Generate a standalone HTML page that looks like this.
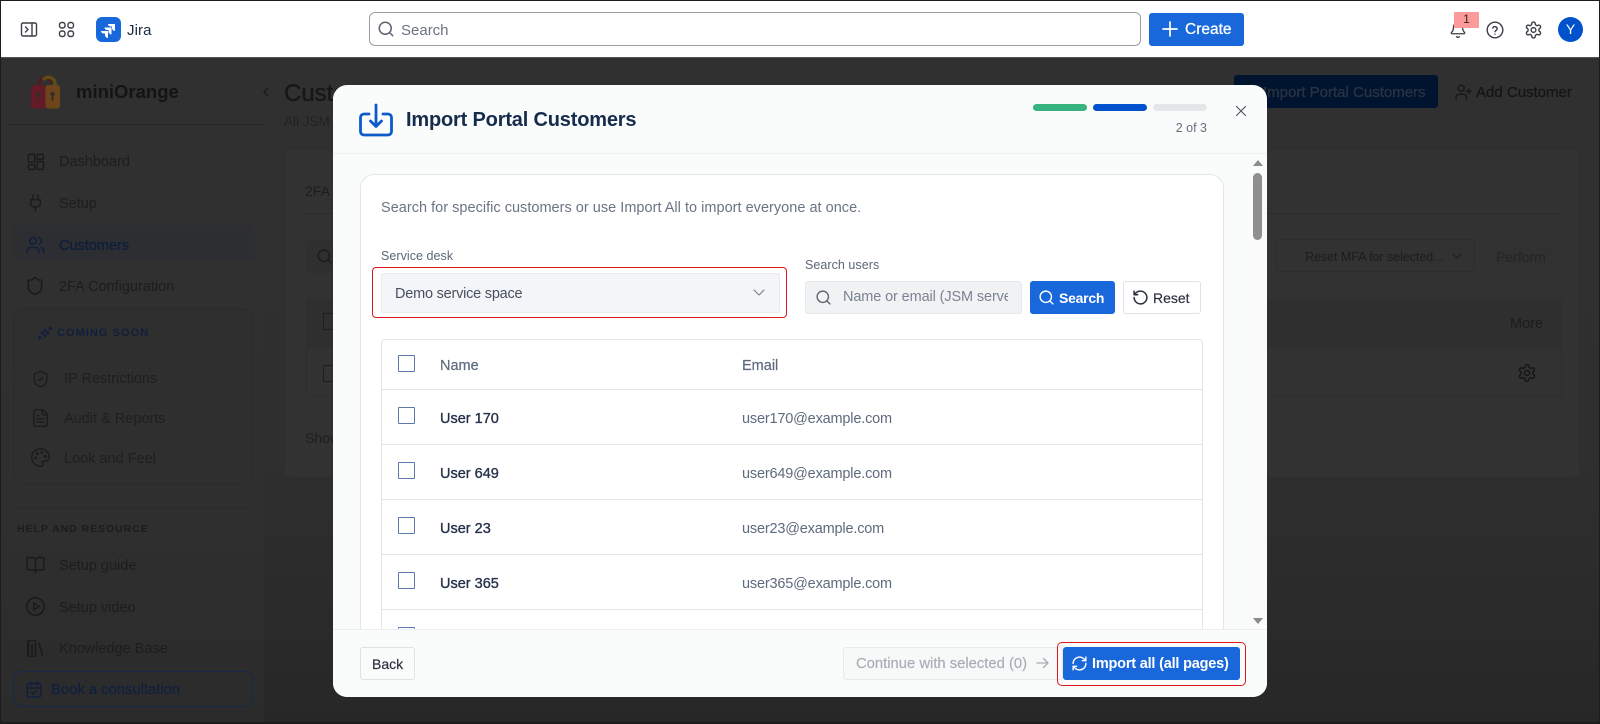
<!DOCTYPE html>
<html lang="en"><head><meta charset="utf-8"><title>Import Portal Customers</title>
<style>
*{box-sizing:border-box}
html,body{margin:0;padding:0;width:1600px;height:724px;overflow:hidden;background:#2a2a2a;font-family:"Liberation Sans",Arial,sans-serif}
.a{position:absolute}
.t{position:absolute;white-space:nowrap;line-height:20px;height:20px}
svg{position:absolute;display:block;fill:none;stroke-linecap:round;stroke-linejoin:round}
.d{color:#1d1d1d;font-size:14.5px}
.b{font-weight:bold}
.cb{position:absolute;left:398px;width:17px;height:17px;border:1.5px solid #5a78ad;border-radius:1px;background:#fff}
.hl{position:absolute;left:381px;width:822px;height:1px;background:#e3e5e8}
.n{left:440px;font-size:14.5px;color:#26324a;-webkit-text-stroke:.35px #26324a}
.e{left:742px;font-size:14.5px;color:#5e6a7d;letter-spacing:-.18px}
</style></head><body>
<div class="a" style="left:0;top:0;width:1600px;height:724px;overflow:hidden;filter:blur(.3px)">

<!-- dim page -->
<div class="a" style="left:264px;top:58px;width:1336px;height:666px;background:linear-gradient(#303030 0,#2f2f2f 60%,#272727 100%)"></div>
<div class="a" style="left:0;top:58px;width:264px;height:666px;background:linear-gradient(#303030 0,#2f2f2f 70%,#2b2b2b 100%)"></div>
<div class="a" style="left:4px;top:124px;width:260px;height:1px;background:#292929"></div>

<!-- logo -->
<svg style="left:30px;top:74px" width="32" height="36" viewBox="0 0 32 36">
<path d="M9 13V9.500a6 6 0 0 1 11-3" stroke="#4e1a24" stroke-width="3.400"/>
<path d="M14 5a6.500 6.500 0 0 1 11 4.500V14" stroke="#5b4d14" stroke-width="3.400"/>
<rect x="1" y="11" width="15" height="23.500" rx="3" fill="#651a28"/>
<rect x="15.500" y="11" width="14.500" height="23.500" rx="3" fill="#6e451a"/>
<circle cx="8.500" cy="20" r="2.200" fill="#2e2e2e"/><path d="M8.500 21v5" stroke="#2e2e2e" stroke-width="2"/>
<circle cx="22.500" cy="20" r="2.200" fill="#2e2e2e"/><path d="M22.500 21v5" stroke="#2e2e2e" stroke-width="2"/>
</svg>
<div class="t b" style="left:76px;top:82px;font-size:18.5px;color:#141414;letter-spacing:0">miniOrange</div>
<svg style="left:260px;top:85px" width="12" height="14" viewBox="0 0 12 14"><path d="M8 3 4 7l4 4" stroke="#1a1a1a" stroke-width="1.400"/></svg>

<!-- sidebar nav -->
<div class="a" style="left:13px;top:225px;width:242px;height:36px;background:#2d2e31;border-radius:6px"></div>
<svg style="left:26px;top:152px" width="19" height="19" viewBox="0 0 24 24" stroke="#1a1a1a" stroke-width="1.800"><rect x="3" y="3" width="8" height="10" rx="1.500"/><rect x="14" y="3" width="8" height="6" rx="1.500"/><rect x="14" y="12" width="8" height="10" rx="1.500"/><rect x="3" y="16" width="8" height="6" rx="1.500"/></svg>
<div class="t d" style="left:59px;top:152px">Dashboard</div>
<svg style="left:26px;top:193px" width="19" height="20" viewBox="0 0 24 24" stroke="#1a1a1a" stroke-width="1.800"><path d="M12 22v-5M9 8V2M15 8V2M18 8v5a4 4 0 0 1-4 4h-4a4 4 0 0 1-4-4V8z"/></svg>
<div class="t d" style="left:59px;top:194px">Setup</div>
<svg style="left:25px;top:235px" width="21" height="20" viewBox="0 0 24 24" stroke="#101f3d" stroke-width="1.800"><path d="M16 21v-2a4 4 0 0 0-4-4H6a4 4 0 0 0-4 4v2"/><circle cx="9" cy="7" r="4"/><path d="M22 21v-2a4 4 0 0 0-3-3.870M16 3.130a4 4 0 0 1 0 7.750"/></svg>
<div class="t" style="left:59px;top:236px;font-size:14.5px;color:#0f1e3c;-webkit-text-stroke:.3px #0f1e3c">Customers</div>
<svg style="left:25px;top:276px" width="20" height="20" viewBox="0 0 24 24" stroke="#1a1a1a" stroke-width="1.800"><path d="M20 13c0 5-3.500 7.500-7.660 8.950a1 1 0 0 1-.67-.01C7.500 20.500 4 18 4 13V6a1 1 0 0 1 1-1c2 0 4.500-1.200 6.240-2.720a1.170 1.170 0 0 1 1.520 0C14.510 3.810 17 5 19 5a1 1 0 0 1 1 1z"/></svg>
<div class="t d" style="left:59px;top:277px">2FA Configuration</div>

<!-- coming soon -->
<div class="a" style="left:13px;top:308px;width:240px;height:176px;border:1px solid #2b2b2b;border-radius:10px;background:#2f2f2f"></div>
<svg style="left:37px;top:325px" width="16" height="16" viewBox="0 0 24 24" stroke="#101f3d" stroke-width="2.200"><path d="M12 6l2 4 4 2-4 2-2 4-2-4-4-2 4-2zM20 3v4M18 5h4M4 17v4M2 19h4"/></svg>
<div class="t b" style="left:57px;top:323px;font-size:11px;color:#101f3d;letter-spacing:1.050px">COMING SOON</div>
<svg style="left:31px;top:369px" width="19" height="20" viewBox="0 0 24 24" stroke="#1c1c1c" stroke-width="1.700"><path d="M20 13c0 5-3.500 7.500-7.660 8.950a1 1 0 0 1-.67-.01C7.500 20.500 4 18 4 13V6a1 1 0 0 1 1-1c2 0 4.500-1.200 6.240-2.720a1.170 1.170 0 0 1 1.520 0C14.510 3.810 17 5 19 5a1 1 0 0 1 1 1z"/><path d="m9 12 2 2 4-4"/></svg>
<div class="t d" style="left:64px;top:369px;color:#1f1f1f">IP Restrictions</div>
<svg style="left:30px;top:408px" width="21" height="20" viewBox="0 0 24 24" stroke="#1c1c1c" stroke-width="1.700"><path d="M15 2H6a2 2 0 0 0-2 2v16a2 2 0 0 0 2 2h12a2 2 0 0 0 2-2V7z"/><path d="M14 2v4a2 2 0 0 0 2 2h4M10 9H8M16 13H8M16 17H8"/></svg>
<div class="t d" style="left:64px;top:409px;color:#1f1f1f">Audit &amp; Reports</div>
<svg style="left:30px;top:447px" width="21" height="21" viewBox="0 0 24 24" stroke="#1c1c1c" stroke-width="1.700"><path d="M12 22a10 10 0 1 1 10-10c0 2.500-2 4-4 4h-2.300a1.700 1.700 0 0 0-1.200 2.900c.5.5.5 1.300.2 1.900-.5.8-1.500 1.200-2.700 1.200z"/><circle cx="13.500" cy="6.500" r=".8"/><circle cx="17.500" cy="10.500" r=".8"/><circle cx="6.500" cy="12.500" r=".8"/><circle cx="8.500" cy="7.500" r=".8"/></svg>
<div class="t d" style="left:64px;top:449px;color:#1f1f1f">Look and Feel</div>

<div class="a" style="left:13px;top:508px;width:240px;height:1px;background:#2a2a2a"></div>
<div class="t b" style="left:17px;top:519px;font-size:10.5px;color:#1c1c1c;letter-spacing:.95px">HELP AND RESOURCE</div>
<svg style="left:25px;top:555px" width="21" height="20" viewBox="0 0 24 24" stroke="#1a1a1a" stroke-width="1.700"><path d="M12 7v14M3 18a1 1 0 0 1-1-1V4a1 1 0 0 1 1-1h5a4 4 0 0 1 4 4 4 4 0 0 1 4-4h5a1 1 0 0 1 1 1v13a1 1 0 0 1-1 1h-6a3 3 0 0 0-3 3 3 3 0 0 0-3-3z"/></svg>
<div class="t d" style="left:59px;top:556px">Setup guide</div>
<svg style="left:25px;top:596px" width="21" height="21" viewBox="0 0 24 24" stroke="#1a1a1a" stroke-width="1.700"><circle cx="12" cy="12" r="10"/><path d="m10 8 6 4-6 4z"/></svg>
<div class="t d" style="left:59px;top:598px">Setup video</div>
<svg style="left:25px;top:638px" width="21" height="21" viewBox="0 0 24 24" stroke="#1a1a1a" stroke-width="1.700"><path d="m16 6 4 14M12 6v14M8 8v12M4 4v16"/><path d="M3 3h9v18H3z" stroke-width="1.200"/></svg>
<div class="t d" style="left:59px;top:639px">Knowledge Base</div>
<div class="a" style="left:13px;top:671px;width:240px;height:36px;border:1px solid #16294a;border-radius:9px"></div>
<svg style="left:25px;top:680px" width="18" height="19" viewBox="0 0 24 24" stroke="#101f3d" stroke-width="2"><rect x="3" y="4" width="18" height="18" rx="2"/><path d="M16 2v4M8 2v4M3 10h18M9 16l2 2 4-4"/></svg>
<div class="t" style="left:51px;top:680px;font-size:14.8px;color:#10203f;-webkit-text-stroke:.2px #10203f">Book a consultation</div>

<!-- main -->
<div class="t" style="left:284px;top:82px;font-size:24px;color:#161616;height:24px;line-height:24px;-webkit-text-stroke:.3px #161616">Customers</div>
<div class="t" style="left:284px;top:112px;font-size:13.5px;color:#222">All JSM</div>
<div class="a" style="left:284px;top:148px;width:1296px;height:330px;background:#323232;border:1px solid #2e2e2e;border-radius:6px"></div>
<div class="t" style="left:305px;top:181px;font-size:14px;color:#1d1d1d">2FA</div>
<div class="a" style="left:300px;top:213px;width:1260px;height:1px;background:#2b2b2b"></div>
<div class="a" style="left:307px;top:240px;width:200px;height:33px;background:#2f2f2f;border-radius:3px"></div>
<svg style="left:316px;top:248px" width="17" height="17" viewBox="0 0 24 24" stroke="#1c1c1c" stroke-width="2"><circle cx="11" cy="11" r="8"/><path d="m21 21-4.300-4.300"/></svg>
<div class="a" style="left:306px;top:299px;width:1256px;height:48px;background:#2f2f2f"></div>
<div class="a" style="left:306px;top:347px;width:1256px;height:50px;border:1px solid #2d2d2d;border-top:0"></div>
<div class="a" style="left:323px;top:313px;width:17px;height:17px;border:1px solid #1e1e1e"></div>
<div class="a" style="left:323px;top:365px;width:17px;height:17px;border:1px solid #1e1e1e"></div>
<div class="t" style="left:305px;top:428px;font-size:14px;color:#1d1d1d">Showing</div>
<div class="a" style="left:1276px;top:239px;width:199px;height:33px;border:1px solid #2d2d2d;border-radius:3px"></div>
<div class="t" style="left:1305px;top:247px;font-size:12.5px;color:#1c1c1c;letter-spacing:-.05px">Reset MFA for selected...</div>
<svg style="left:1450px;top:250px" width="14" height="12" viewBox="0 0 14 12"><path d="m3 4 4 4 4-4" stroke="#222" stroke-width="1.400"/></svg>
<div class="a" style="left:1485px;top:240px;width:75px;height:33px;background:#313131;border-radius:3px"></div>
<div class="t" style="left:1496px;top:247px;font-size:14px;color:#262626;-webkit-text-stroke:.2px #262626">Perform</div>
<div class="t" style="left:1510px;top:314px;font-size:14.5px;color:#1c1c1c">More</div>
<svg style="left:1517px;top:363px" width="20" height="20" viewBox="0 0 24 24" stroke="#141414" stroke-width="1.700"><path d="M12.200 2h-.4a2 2 0 0 0-2 2v.2a2 2 0 0 1-1 1.700l-.4.3a2 2 0 0 1-2 0l-.2-.1a2 2 0 0 0-2.700.7l-.2.4a2 2 0 0 0 .7 2.700l.2.1a2 2 0 0 1 1 1.700v.6a2 2 0 0 1-1 1.700l-.2.1a2 2 0 0 0-.7 2.700l.2.4a2 2 0 0 0 2.700.7l.2-.1a2 2 0 0 1 2 0l.4.3a2 2 0 0 1 1 1.700v.2a2 2 0 0 0 2 2h.4a2 2 0 0 0 2-2v-.2a2 2 0 0 1 1-1.700l.4-.3a2 2 0 0 1 2 0l.2.1a2 2 0 0 0 2.700-.7l.2-.4a2 2 0 0 0-.7-2.700l-.2-.1a2 2 0 0 1-1-1.700v-.6a2 2 0 0 1 1-1.700l.2-.1a2 2 0 0 0 .7-2.700l-.2-.4a2 2 0 0 0-2.700-.7l-.2.1a2 2 0 0 1-2 0l-.4-.3a2 2 0 0 1-1-1.700V4a2 2 0 0 0-2-2z"/><circle cx="12" cy="12" r="3"/></svg>
<div class="a" style="left:1234px;top:75px;width:204px;height:33px;background:#00142f;border-radius:3px"></div>
<div class="t" style="left:1263px;top:83px;font-size:15px;color:#2b3240;-webkit-text-stroke:.3px #2b3240">Import Portal Customers</div>
<svg style="left:1454px;top:83px" width="19" height="18" viewBox="0 0 24 24" stroke="#181818" stroke-width="2"><path d="M16 21v-2a4 4 0 0 0-4-4H6a4 4 0 0 0-4 4v2"/><circle cx="9" cy="7" r="4"/><path d="M19 8v6M22 11h-6"/></svg>
<div class="t" style="left:1476px;top:83px;font-size:15px;color:#151515;-webkit-text-stroke:.25px #151515">Add Customer</div>

<!-- top bar -->
<div class="a" style="left:0;top:0;width:1600px;height:58px;background:#fff;border-top:1px solid #222;border-bottom:1px solid #555"></div>
<svg style="left:20px;top:22px" width="18" height="15" viewBox="0 0 18 15" stroke="#3b3f46" stroke-width="1.400"><rect x="1.500" y="1" width="15" height="13" rx="1.500"/><path d="M12 1v13M5.500 5l2.500 2.500L5.500 10"/></svg>
<svg style="left:58px;top:21px" width="17" height="17" viewBox="0 0 17 17" stroke="#3b3f46" stroke-width="1.400"><rect x="1.500" y="1.500" width="5.500" height="5.500" rx="2.200"/><rect x="10" y="1.500" width="5.500" height="5.500" rx="2.200"/><rect x="1.500" y="10" width="5.500" height="5.500" rx="2.200"/><rect x="10" y="10" width="5.500" height="5.500" rx="2.200"/></svg>
<div class="a" style="left:96px;top:17px;width:25px;height:25px;background:#1868db;border-radius:6px"></div>
<svg style="left:96px;top:17px" width="25" height="25" viewBox="0 0 25 25"><path d="M12 7h7v7a3 3 0 0 1-3-3V9.500h-1.500A2.500 2.500 0 0 1 12 7z" fill="#fff"/><path d="M8.500 10.500h7v7a3 3 0 0 1-3-3V13H11a2.500 2.500 0 0 1-2.500-2.500z" fill="#fff"/><path d="M5 14h7v7a3 3 0 0 1-3-3v-1.500H7.500A2.500 2.500 0 0 1 5 14z" fill="#fff"/></svg>
<div class="t" style="left:127px;top:21px;font-size:15px;color:#1c2b41;letter-spacing:.1px">Jira</div>
<div class="a" style="left:369px;top:12px;width:772px;height:34px;border:1px solid #9a9ea6;border-radius:6px;background:#fff"></div>
<svg style="left:377px;top:20px" width="18" height="18" viewBox="0 0 24 24" stroke="#5b6270" stroke-width="2"><circle cx="11" cy="11" r="8"/><path d="m21 21-4.300-4.300"/></svg>
<div class="t" style="left:401px;top:20.500px;font-size:15px;color:#6b7280">Search</div>
<div class="a" style="left:1149px;top:13px;width:95px;height:33px;background:#1868db;border-radius:3px"></div>
<svg style="left:1161px;top:20px" width="18" height="18" viewBox="0 0 18 18" stroke="#fff" stroke-width="1.700"><path d="M9 2v14M2 9h14"/></svg>
<div class="t" style="left:1185px;top:20px;font-size:15.500px;color:#fff;-webkit-text-stroke:.25px #fff">Create</div>
<svg style="left:1449px;top:20px" width="18" height="20" viewBox="0 0 24 24" stroke="#3b3f46" stroke-width="1.800"><path d="M10.300 21a2 2 0 0 0 3.400 0M3.300 15.300A1 1 0 0 0 4 17h16a1 1 0 0 0 .7-1.700C19.400 14 18 12.600 18 8A6 6 0 0 0 6 8c0 4.600-1.400 6-2.700 7.300z"/></svg>
<div class="a" style="left:1454px;top:12px;width:25px;height:16px;background:#fb9a9a;border-radius:1px;color:#3a2020;font-size:12px;line-height:15px;text-align:center">1</div>
<svg style="left:1486px;top:21px" width="18" height="18" viewBox="0 0 18 18" stroke="#3b3f46" stroke-width="1.400"><circle cx="9" cy="9" r="7.800"/><path d="M6.800 7a2.300 2.300 0 0 1 4.400.7c0 1.500-2.200 2-2.200 3M9 13.200v.1"/></svg>
<svg style="left:1524px;top:20px" width="19" height="20" viewBox="0 0 24 24" stroke="#3b3f46" stroke-width="1.800"><path d="M12.200 2h-.4a2 2 0 0 0-2 2v.2a2 2 0 0 1-1 1.700l-.4.3a2 2 0 0 1-2 0l-.2-.1a2 2 0 0 0-2.700.7l-.2.4a2 2 0 0 0 .7 2.700l.2.1a2 2 0 0 1 1 1.700v.6a2 2 0 0 1-1 1.700l-.2.1a2 2 0 0 0-.7 2.700l.2.4a2 2 0 0 0 2.700.7l.2-.1a2 2 0 0 1 2 0l.4.3a2 2 0 0 1 1 1.700v.2a2 2 0 0 0 2 2h.4a2 2 0 0 0 2-2v-.2a2 2 0 0 1 1-1.700l.4-.3a2 2 0 0 1 2 0l.2.1a2 2 0 0 0 2.700-.7l.2-.4a2 2 0 0 0-.7-2.700l-.2-.1a2 2 0 0 1-1-1.700v-.6a2 2 0 0 1 1-1.700l.2-.1a2 2 0 0 0 .7-2.700l-.2-.4a2 2 0 0 0-2.700-.7l-.2.1a2 2 0 0 1-2 0l-.4-.3a2 2 0 0 1-1-1.700V4a2 2 0 0 0-2-2z"/><circle cx="12" cy="12" r="3"/></svg>
<div class="a" style="left:1558px;top:17px;width:25px;height:25px;background:#0052cc;border-radius:50%;color:#fff;font-size:14px;line-height:25px;text-align:center">Y</div>

<!-- modal -->
<div class="a" style="left:333px;top:85px;width:934px;height:612px;background:#fafbfb;border-radius:14px;overflow:hidden">
  <div class="a" style="left:0;top:68px;width:934px;height:1px;background:#eff0f2"></div>
  <div class="a" style="left:27px;top:89px;width:864px;height:480px;background:#fff;border:1px solid #e3e5e8;border-bottom:0;border-radius:14px 14px 0 0"></div>
  <div class="a" style="left:0;top:544px;width:934px;height:68px;background:#fafbfb;border-top:1px solid #eceef0"></div>
  <div class="a" style="left:920px;top:88px;width:14px;height:456px;background:#fafafa"></div>
</div>
<svg style="left:359px;top:103px;stroke:#0c5bc8" width="34" height="34" viewBox="0 0 34 34" stroke-width="2.800"><path d="M10 11H5a3.500 3.500 0 0 0-3.500 3.500v14A3.500 3.500 0 0 0 5 32h24a3.500 3.500 0 0 0 3.500-3.500v-14A3.500 3.500 0 0 0 29 11h-5"/><path d="M17 2v21M11.500 18l5.500 5.500 5.500-5.500"/></svg>
<div class="t" style="left:406px;top:110px;font-size:20px;color:#172b4d;font-weight:bold;letter-spacing:-.18px">Import Portal Customers</div>
<div class="a" style="left:1033px;top:104px;width:54px;height:7px;background:#36b37e;border-radius:4px"></div>
<div class="a" style="left:1093px;top:104px;width:54px;height:7px;background:#0052cc;border-radius:4px"></div>
<div class="a" style="left:1153px;top:104px;width:54px;height:7px;background:#e4e6e9;border-radius:4px"></div>
<div class="t" style="left:1165px;top:118px;font-size:12.500px;color:#66707f;width:42px;text-align:right">2 of 3</div>
<svg style="left:1235px;top:105px" width="12" height="12" viewBox="0 0 12 12" stroke="#4a5260" stroke-width="1.100"><path d="M1.500 1.500l9 9M10.500 1.500l-9 9"/></svg>
<!-- scrollbar -->
<svg style="left:1252px;top:159px" width="12" height="8" viewBox="0 0 12 8"><path d="M6 1 11 7H1z" fill="#8a8a8a"/></svg>
<div class="a" style="left:1253px;top:173px;width:9px;height:67px;background:#8f8f8f;border-radius:5px"></div>
<svg style="left:1252px;top:617px" width="12" height="8" viewBox="0 0 12 8"><path d="M6 7 11 1H1z" fill="#8a8a8a"/></svg>

<div class="t" style="left:381px;top:198px;font-size:14.500px;color:#6b7483;letter-spacing:.02px">Search for specific customers or use Import All to import everyone at once.</div>
<div class="t" style="left:381px;top:246px;font-size:12.500px;color:#5c6675;letter-spacing:.05px">Service desk</div>
<div class="a" style="left:372px;top:267px;width:415px;height:51px;border:1.500px solid #e0161e;border-radius:4px"></div>
<div class="a" style="left:381px;top:273px;width:399px;height:40px;background:#f4f5f8;border:1px solid #e9ebef;border-radius:2px"></div>
<div class="t" style="left:395px;top:284px;font-size:14.500px;color:#47505f;letter-spacing:-.22px">Demo service space</div>
<svg style="left:752px;top:288px" width="14" height="10" viewBox="0 0 14 10"><path d="m2 2 5 5 5-5" stroke="#7c8492" stroke-width="1.200"/></svg>
<div class="t" style="left:805px;top:255px;font-size:12.500px;color:#5c6675;letter-spacing:.05px">Search users</div>
<div class="a" style="left:805px;top:281px;width:217px;height:33px;background:#f1f2f4;border:1px solid #e6e8eb;border-radius:3px"></div>
<svg style="left:815px;top:289px" width="17" height="17" viewBox="0 0 24 24" stroke="#5f6774" stroke-width="2"><circle cx="11" cy="11" r="8"/><path d="m21 21-4.300-4.300"/></svg>
<div class="a" style="left:843px;top:287px;width:165px;height:20px;overflow:hidden"><div class="t" style="left:0;top:0;font-size:14.500px;color:#7a8391;letter-spacing:-.12px">Name or email (JSM server)</div></div>
<div class="a" style="left:1030px;top:281px;width:85px;height:33px;background:#1868db;border-radius:3px"></div>
<svg style="left:1038px;top:289px" width="17" height="17" viewBox="0 0 24 24" stroke="#fff" stroke-width="2"><circle cx="11" cy="11" r="8"/><path d="m21 21-4.300-4.300"/></svg>
<div class="t" style="left:1059px;top:288px;font-size:14px;color:#fff;font-weight:bold;letter-spacing:-.25px">Search</div>
<div class="a" style="left:1123px;top:281px;width:78px;height:33px;background:#fff;border:1px solid #dfe1e6;border-radius:3px"></div>
<svg style="left:1132px;top:289px" width="17" height="17" viewBox="0 0 24 24" stroke="#2a3240" stroke-width="2.200"><path d="M3 12a9 9 0 1 0 9-9 9.750 9.750 0 0 0-6.740 2.740L3 8"/><path d="M3 3v5h5"/></svg>
<div class="t" style="left:1153px;top:288px;font-size:14px;color:#2a3240;-webkit-text-stroke:.2px #2a3240">Reset</div>

<!-- table -->
<div class="a" style="left:381px;top:339px;width:822px;height:290px;border:1px solid #e3e5e8;border-bottom:0;border-radius:4px 4px 0 0"></div>
<div class="hl" style="top:389px"></div><div class="hl" style="top:444px"></div><div class="hl" style="top:499px"></div><div class="hl" style="top:554px"></div><div class="hl" style="top:609px"></div>
<div class="cb" style="top:355px"></div><div class="cb" style="top:407px"></div><div class="cb" style="top:462px"></div><div class="cb" style="top:517px"></div><div class="cb" style="top:572px"></div>
<div class="cb" style="top:627px;height:2px;border-bottom:0"></div>
<div class="t" style="left:440px;top:356px;font-size:14.500px;color:#5e6a7d;-webkit-text-stroke:.2px #5e6a7d">Name</div>
<div class="t" style="left:742px;top:356px;font-size:14.500px;color:#5e6a7d;-webkit-text-stroke:.2px #5e6a7d">Email</div>
<div class="t n" style="top:409px">User 170</div><div class="t e" style="top:409px">user170@example.com</div>
<div class="t n" style="top:464px">User 649</div><div class="t e" style="top:464px">user649@example.com</div>
<div class="t n" style="top:519px">User 23</div><div class="t e" style="top:519px">user23@example.com</div>
<div class="t n" style="top:574px">User 365</div><div class="t e" style="top:574px">user365@example.com</div>

<!-- footer -->
<div class="a" style="left:360px;top:647px;width:55px;height:33px;background:#fafbfb;border:1px solid #dfe1e6;border-radius:3px"></div>
<div class="t" style="left:372px;top:653.500px;font-size:14px;color:#2a3240;-webkit-text-stroke:.2px #2a3240">Back</div>
<div class="a" style="left:843px;top:647px;width:220px;height:33px;background:#f7f8f8;border:1px solid #e8e9eb;border-radius:3px"></div>
<div class="t" style="left:856px;top:654px;font-size:14.800px;color:#a8adb5;-webkit-text-stroke:.15px #a8adb5">Continue with selected (0)</div>
<svg style="left:1035px;top:656px" width="15" height="14" viewBox="0 0 15 14" stroke="#a8adb5" stroke-width="1.300"><path d="M2 7h11M8.500 2.500 13 7l-4.500 4.500"/></svg>
<div class="a" style="left:1057px;top:642px;width:189px;height:44px;border:1.500px solid #e0161e;border-radius:5px"></div>
<div class="a" style="left:1063px;top:647px;width:177px;height:33px;background:#1868db;border-radius:3px"></div>
<svg style="left:1071px;top:655px" width="17" height="17" viewBox="0 0 24 24" stroke="#fff" stroke-width="2"><path d="M3 12a9 9 0 0 1 15-6.700L21 8M21 3v5h-5M21 12a9 9 0 0 1-15 6.700L3 16M8 16H3v5"/></svg>
<div class="t" style="left:1092px;top:654px;font-size:14.500px;color:#fff;font-weight:bold;letter-spacing:-.2px">Import all (all pages)</div>

<!-- screenshot frame -->
<div class="a" style="left:0;top:0;width:1600px;height:724px;border:1px solid #1c1c1c;border-width:1px 1px 2px 1px;pointer-events:none"></div>
</div>
</body></html>
